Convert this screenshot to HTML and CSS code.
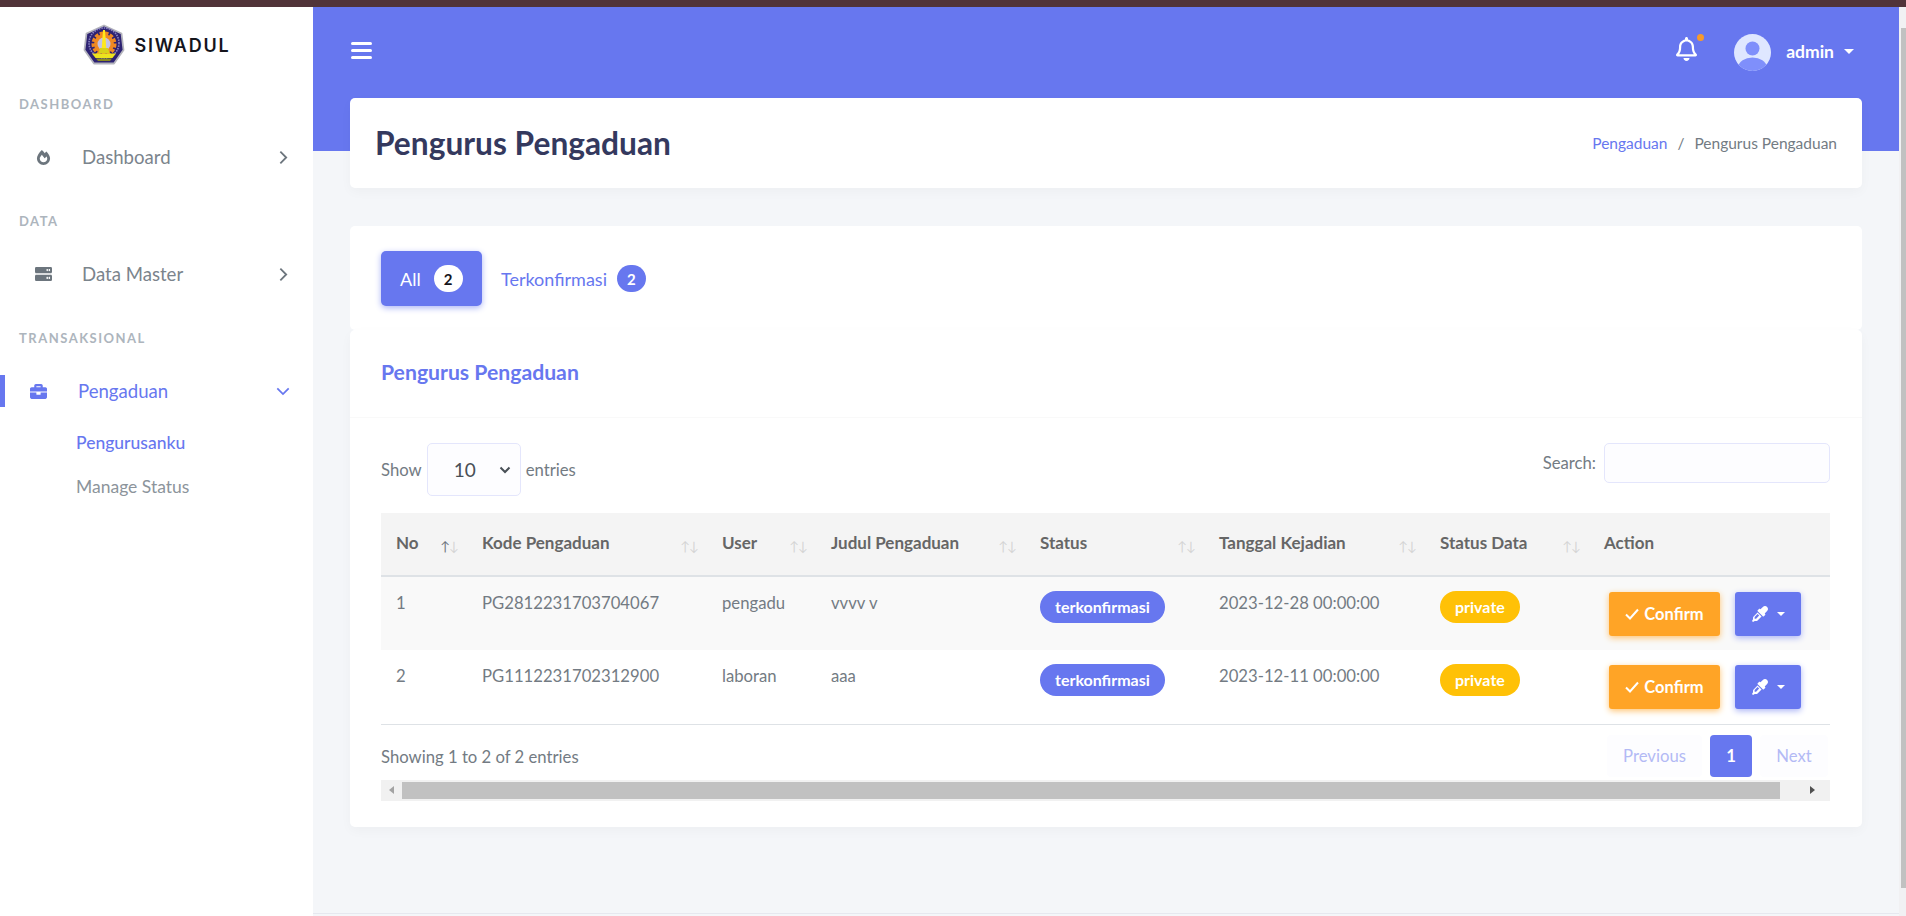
FILE: index.html
```html
<!DOCTYPE html>
<html lang="id">
<head>
<meta charset="utf-8">
<title>Pengurus Pengaduan</title>
<link rel="stylesheet" href="styles.css">
</head>
<body>
<div class="topbar"></div>
<div class="app">
  <aside class="sidebar">
    <div class="brand">
      <svg class="logo" viewBox="0 0 42 42" aria-hidden="true">
        <path d="M21 1.500 38.500 9.500 40.500 26 31 39.500H11L1.500 26 3.500 9.500Z" fill="#2d2272" stroke="#b4b4bc" stroke-width="1.800" stroke-linejoin="round"/>
        <circle cx="21" cy="19" r="15" fill="none" stroke="#8c86c4" stroke-width="1.600" stroke-dasharray="1.500 1"/>
        <circle cx="21" cy="20" r="10.500" fill="none" stroke="#ef8a22" stroke-width="4" stroke-dasharray="3.500 1.500"/>
        <circle cx="21" cy="20" r="10" fill="#ef8a22"/>
        <circle cx="21" cy="20" r="6.500" fill="#c4c3e4"/>
        <path d="M20 6h2l1.300 19h-4.600Z" fill="#ffe91c"/>
        <path d="M17 24h8l1.500 5h-11Z" fill="#d9d21a"/>
        <path d="M9 29.500h24L29.500 34h-17Z" fill="#ece31f"/>
        <path d="M13 34.500h16L27 37H15Z" fill="#8a8a20"/>
      </svg>
      <span class="brand-name">SIWADUL</span>
    </div>
    <div class="menu-head first">DASHBOARD</div>
    <a class="menu-item">
      <svg class="mi-icon" viewBox="0 0 448 512"><path d="M323.56 51.2c-20.8 19.3-39.58 39.59-56.22 59.97C240.08 73.62 206.28 35.53 168 0 69.74 91.17 0 209.96 0 281.6 0 408.85 100.290 512 224 512s224-103.15 224-230.4c0-53.27-51.98-163.14-124.44-230.4zm-19.47 340.65C282.43 407.01 255.72 416 226.86 416 154.71 416 96 368.26 96 290.75c0-38.61 24.31-72.63 72.79-130.75 6.93 7.98 98.83 125.34 98.83 125.34l58.63-66.88c4.14 6.85 7.91 13.55 11.27 19.97 27.35 52.19 15.81 118.97-33.43 153.42z"/></svg>
      <span class="mi-label">Dashboard</span>
      <svg class="mi-chev" viewBox="0 0 10 16"><path d="M1.500 1.500 8 8l-6.500 6.500"/></svg>
    </a>
    <div class="menu-head">DATA</div>
    <a class="menu-item">
      <svg class="mi-icon srv" viewBox="0 32 512 288" preserveAspectRatio="none"><path d="M480 160H32c-17.673 0-32-14.327-32-32V64c0-17.673 14.327-32 32-32h448c17.673 0 32 14.327 32 32v64c0 17.673-14.327 32-32 32zm-48-88c-13.255 0-24 10.745-24 24s10.745 24 24 24 24-10.745 24-24-10.745-24-24-24zm-64 0c-13.255 0-24 10.745-24 24s10.745 24 24 24 24-10.745 24-24-10.745-24-24-24zm112 248H32c-17.673 0-32-14.327-32-32v-64c0-17.673 14.327-32 32-32h448c17.673 0 32 14.327 32 32v64c0 17.673-14.327 32-32 32zm-48-88c-13.255 0-24 10.745-24 24s10.745 24 24 24 24-10.745 24-24-10.745-24-24-24zm-64 0c-13.255 0-24 10.745-24 24s10.745 24 24 24 24-10.745 24-24-10.745-24-24-24z"/></svg>
      <span class="mi-label">Data Master</span>
      <svg class="mi-chev" viewBox="0 0 10 16"><path d="M1.500 1.500 8 8l-6.500 6.500"/></svg>
    </a>
    <div class="menu-head">TRANSAKSIONAL</div>
    <a class="menu-item active">
      <svg class="mi-icon" viewBox="0 32 512 448"><path d="M320 336c0 8.840-7.160 16-16 16h-96c-8.840 0-16-7.160-16-16v-48H0v144c0 25.600 22.400 48 48 48h416c25.600 0 48-22.400 48-48V288H320v48zm144-208h-80V80c0-25.600-22.400-48-48-48H176c-25.600 0-48 22.400-48 48v48H48c-25.600 0-48 22.400-48 48v80h512v-80c0-25.600-22.400-48-48-48zm-144 0H192V96h128v32z"/></svg>
      <span class="mi-label">Pengaduan</span>
      <svg class="mi-chev down" viewBox="0 0 16 10"><path d="M1.500 1.500 8 8l6.500-6.500"/></svg>
    </a>
    <a class="sub-item current">Pengurusanku</a>
    <a class="sub-item">Manage Status</a>
  </aside>

  <main class="main">
    <header class="hero">
      <button class="burger" aria-label="menu"><i></i><i></i><i></i></button>
      <div class="hero-right">
        <span class="bell">
          <svg viewBox="0 0 448 512"><path d="M439.390 362.290c-19.320-20.760-55.470-51.990-55.470-154.290 0-77.700-54.480-139.900-127.940-155.160V32c0-17.670-14.320-32-31.980-32s-31.980 14.330-31.980 32v20.840C118.560 68.100 64.080 130.300 64.080 208c0 102.300-36.150 133.530-55.470 154.290-6 6.450-8.660 14.160-8.610 21.710.11 16.400 12.980 32 32.100 32h383.800c19.120 0 32-15.600 32.100-32 .05-7.550-2.610-15.270-8.610-21.710zM67.530 368c21.220-27.970 44.420-74.330 44.530-159.420 0-.2-.06-.38-.06-.58 0-61.860 50.140-112 112-112s112 50.140 112 112c0 .2-.06.38-.06.58.11 85.100 23.310 131.460 44.530 159.420H67.530zM224 512c35.320 0 63.970-28.650 63.970-64H160.030c0 35.350 28.650 64 63.970 64z"/></svg>
          <b class="dot"></b>
        </span>
        <svg class="avatar" viewBox="0 0 37 37"><defs><clipPath id="av"><circle cx="18.500" cy="18.500" r="18.500"/></clipPath></defs><g clip-path="url(#av)"><rect width="37" height="37" fill="#dfe7ff"/><circle cx="18.500" cy="14.500" r="7" fill="#7f8ffb"/><ellipse cx="18.500" cy="33" rx="14" ry="9.500" fill="#7f8ffb"/></g></svg>
        <span class="user">admin</span>
        <span class="caret light"></span>
      </div>
    </header>

    <div class="content">
      <section class="card page-head">
        <h1>Pengurus Pengaduan</h1>
        <nav class="crumbs"><a>Pengaduan</a><span class="sep">/</span><span>Pengurus Pengaduan</span></nav>
      </section>

      <section class="card tabs">
        <a class="tab on">All <span class="pill white">2</span></a>
        <a class="tab">Terkonfirmasi <span class="pill blue">2</span></a>
      </section>

      <section class="card data">
        <h2 class="data-title">Pengurus Pengaduan</h2>
        <div class="data-body">
          <div class="dt-top">
            <label class="dt-len">Show <span class="fake-select">10<svg viewBox="0 0 12 8"><path d="M1.500 1.500 6 6l4.500-4.500"/></svg></span> entries</label>
            <label class="dt-search">Search: <span class="fake-input"></span></label>
          </div>
          <table class="tbl">
            <colgroup>
              <col class="c1"><col class="c2"><col class="c3"><col class="c4"><col class="c5"><col class="c6"><col class="c7"><col class="c8">
            </colgroup>
            <thead>
              <tr>
                <th><div class="th-in">No<span class="sort"><b class="dark">↑</b>↓</span></div></th>
                <th><div class="th-in">Kode Pengaduan<span class="sort">↑↓</span></div></th>
                <th><div class="th-in">User<span class="sort">↑↓</span></div></th>
                <th><div class="th-in">Judul Pengaduan<span class="sort">↑↓</span></div></th>
                <th><div class="th-in">Status<span class="sort">↑↓</span></div></th>
                <th><div class="th-in">Tanggal Kejadian<span class="sort">↑↓</span></div></th>
                <th><div class="th-in">Status Data<span class="sort">↑↓</span></div></th>
                <th>Action</th>
              </tr>
            </thead>
            <tbody>
              <tr class="odd">
                <td>1</td><td>PG2812231703704067</td><td>pengadu</td><td>vvvv v</td>
                <td><span class="badge b-blue">terkonfirmasi</span></td>
                <td>2023-12-28 00:00:00</td>
                <td><span class="badge b-yellow">private</span></td>
                <td class="acts">
                  <a class="btn b-orange"><svg class="chk" viewBox="0 0 14 12"><path d="M1 6.500 5 10.500 13 1.500"/></svg>Confirm</a>
                  <a class="btn b-indigo"><svg class="drop" viewBox="0 0 512 512"><path d="M50.750 333.250c-12 12-18.750 28.280-18.750 45.260V424L0 480l32 32 56-32h45.490c16.970 0 33.250-6.740 45.250-18.740l126.640-126.620-128-128L50.750 333.250zM483.880 28.120c-37.470-37.500-98.280-37.500-135.750 0l-77.090 77.090-13.100-13.100c-9.440-9.440-24.650-9.310-33.940 0l-40.970 40.970c-9.370 9.370-9.370 24.570 0 33.940l161.940 161.940c9.440 9.440 24.650 9.310 33.940 0L419.880 288c9.370-9.370 9.370-24.570 0-33.940l-13.100-13.100 77.090-77.090c37.510-37.480 37.510-98.260.01-135.750z"/><path class="drop-in" d="M84 348 178 254 230 306 130 410H84Z"/></svg><span class="caret small"></span></a>
                </td>
              </tr>
              <tr>
                <td>2</td><td>PG1112231702312900</td><td>laboran</td><td>aaa</td>
                <td><span class="badge b-blue">terkonfirmasi</span></td>
                <td>2023-12-11 00:00:00</td>
                <td><span class="badge b-yellow">private</span></td>
                <td class="acts">
                  <a class="btn b-orange"><svg class="chk" viewBox="0 0 14 12"><path d="M1 6.500 5 10.500 13 1.500"/></svg>Confirm</a>
                  <a class="btn b-indigo"><svg class="drop" viewBox="0 0 512 512"><path d="M50.750 333.250c-12 12-18.750 28.280-18.750 45.260V424L0 480l32 32 56-32h45.490c16.970 0 33.250-6.740 45.250-18.740l126.640-126.620-128-128L50.750 333.250zM483.880 28.120c-37.470-37.500-98.280-37.500-135.750 0l-77.090 77.090-13.100-13.100c-9.440-9.440-24.650-9.310-33.940 0l-40.970 40.970c-9.370 9.370-9.370 24.570 0 33.940l161.940 161.940c9.440 9.440 24.650 9.310 33.940 0L419.880 288c9.370-9.370 9.370-24.570 0-33.940l-13.100-13.100 77.090-77.090c37.510-37.480 37.510-98.260.01-135.750z"/><path class="drop-in" d="M84 348 178 254 230 306 130 410H84Z"/></svg><span class="caret small"></span></a>
                </td>
              </tr>
            </tbody>
          </table>
          <div class="dt-foot">
            <span class="dt-info">Showing 1 to 2 of 2 entries</span>
            <div class="pager">
              <a class="pg off prev">Previous</a>
              <a class="pg cur">1</a>
              <a class="pg off next">Next</a>
            </div>
          </div>
          <div class="hscroll">
            <span class="arrow left"></span>
            <span class="thumb"></span>
            <span class="arrow right"></span>
          </div>
        </div>
      </section>
    </div>
    <footer class="foot-line"></footer>
  </main>

  <div class="vscroll"><span class="v-thumb"></span></div>
</div>
</body>
</html>
```
FILE: styles.css
```css
* { box-sizing: border-box; }
html, body { height: 100%; }
body {
  margin: 0;
  overflow: hidden;
  background: #f4f6f9;
  color: #737b83;
  font-family: "Lato", "Noto Sans", sans-serif;
  font-size: 16.700px;
}
a { text-decoration: none; }

.topbar { height: 7px; background: #513439; }
.app { display: flex; height: 909px; }

/* sidebar */
.sidebar { width: 313px; flex: none; background: #fff; }
.brand { display: flex; align-items: center; justify-content: center; gap: 10px; height: 61px; padding-top: 15px; }
.logo { width: 42px; height: 42px; flex: none; }
.brand-name { font-family: "Inter", sans-serif; font-weight: 600; font-size: 18px; letter-spacing: 1.800px; color: #15151c; }
.menu-head { height: 16px; margin: 0 0 0 19px; font-size: 13px; line-height: 16px; font-weight: 700; letter-spacing: 1.500px; color: #adb5bd; }
.menu-head.first { margin-top: 28px; }
.menu-item { display: flex; align-items: center; height: 60px; margin: 15px 0 26px; padding: 0 25px 0 36px; color: #7b848c; font-size: 18.600px; }
.mi-icon { width: 15px; height: 15px; fill: #6c757d; flex: none; margin-right: 31px; }
.mi-icon.srv { width: 17px; height: 14px; margin-left: -1px; margin-right: 30px; }
.mi-label { flex: 1; }
.mi-chev { width: 9px; height: 15px; fill: none; stroke: #6c757d; stroke-width: 2; flex: none; }
.menu-item.active { color: #6777ef; box-shadow: inset 5px 0 0 #6777ef; height: 32px; margin: 29px 0 14px; padding-left: 30px; }
.menu-item.active .mi-icon { fill: #6777ef; width: 17px; height: 15px; margin-right: 31px; }
.mi-chev.down { width: 14px; height: 9px; stroke: #6777ef; margin-right: -2px; }
.sub-item { display: block; height: 44px; padding-left: 76px; line-height: 44px; font-size: 17.500px; color: #8c949b; }
.sub-item.current { color: #6777ef; font-weight: 500; }

/* main */
.main { flex: 1; min-width: 0; display: flex; flex-direction: column; }
.hero { height: 144px; flex: none; background: #6777ef; display: flex; justify-content: space-between; padding: 35px 37px 0 38px; }
.burger { width: 21px; height: 17px; padding: 0; border: 0; background: none; display: flex; flex-direction: column; justify-content: space-between; }
.burger i { display: block; height: 3px; border-radius: 2px; background: #fff; }
.hero-right { display: flex; align-items: flex-start; margin-top: -8px; padding-right: 8px; height: 38px; }
.bell { position: relative; display: block; width: 21px; height: 24px; margin: 3px 37px 0 0; }
.bell svg { display: block; width: 21px; height: 24px; fill: #fff; }
.dot { position: absolute; top: -3px; right: -7px; width: 7px; height: 7px; border-radius: 50%; background: #f79a2b; }
.avatar { width: 37px; height: 37px; flex: none; }
.user { margin: 7px 0 0 15px; font-size: 17.500px; font-weight: 700; color: #fff; line-height: 22px; }
.caret { display: inline-block; border-left: 5px solid transparent; border-right: 5px solid transparent; border-top: 5px solid #fff; }
.caret.light { margin: 15px 0 0 10px; }

.content { flex: 1; margin-top: -53px; padding: 0 37px; }
.card { background: #fff; border-radius: 5px; box-shadow: 0 4px 12px rgba(0, 0, 0, .03); }
.page-head { height: 90px; display: flex; align-items: center; justify-content: space-between; padding: 0 25px; margin-bottom: 38px; }
.page-head h1 { margin: 0; font-size: 31.700px; font-weight: 700; color: #34395e; }
.crumbs { display: flex; font-size: 15.500px; }
.crumbs a { color: #6777ef; }
.sep { margin: 0 10px; }

.tabs { height: 104px; display: flex; align-items: flex-start; padding: 25px 31px 0; box-shadow: none; }
.tab { display: flex; align-items: center; height: 55px; padding: 0 19px; color: #6777ef; font-size: 18px; border-radius: 5px; }
.tab.on { width: 101px; background: #6777ef; color: #fff; box-shadow: 0 2px 6px #acb5f6; }
.pill { display: flex; align-items: center; justify-content: center; height: 27px; min-width: 29px; margin-left: 10px; border-radius: 14px; font-size: 15px; font-weight: 700; }
.pill.white { margin-left: 13px; background: #fff; color: #15151c; }
.pill.blue { background: #6777ef; color: #fff; }

.data { height: 497px; }
.data-title { height: 88px; margin: 0; padding: 0 31px; line-height: 84px; font-size: 21.200px; font-weight: 700; color: #6777ef; border-bottom: 1px solid #f9f9f9; }
.data-body { padding: 0 32px 0 31px; }
.dt-top { display: flex; justify-content: space-between; height: 78px; padding-top: 25px; }
.dt-len { display: flex; align-items: center; height: 53px; gap: 4px; }
.fake-select { display: flex; align-items: center; justify-content: space-between; width: 94px; height: 53px; padding: 0 9px 0 26px; margin: 0 1px; background: #fdfdff; border: 1px solid #e4e6fc; border-radius: 5px; font-size: 19px; color: #495057; }
.fake-select svg { width: 12px; height: 8px; fill: none; stroke: #495057; stroke-width: 2; }
.dt-search { display: flex; align-items: center; height: 40px; gap: 8px; }
.fake-input { display: block; width: 226px; height: 40px; background: #fdfdff; border: 1px solid #e4e6fc; border-radius: 5px; }

.tbl { width: 1449px; table-layout: fixed; border-collapse: collapse; margin-top: 17px; }
.c1 { width: 86px; } .c2 { width: 240px; } .c3 { width: 109px; } .c4 { width: 209px; }
.c5 { width: 179px; } .c6 { width: 221px; } .c7 { width: 164px; } .c8 { width: 241px; }
.tbl th { height: 63px; padding: 0 9px 4px 15px; background: #f4f4f4; border-bottom: 2px solid #dee2e6; text-align: left; font-size: 17px; font-weight: 700; color: #666; vertical-align: middle; }
.th-in { display: flex; justify-content: space-between; align-items: center; }
.sort { font-size: 13px; font-weight: 400; color: #d4d4d4; padding-top: 8px; letter-spacing: -1px; }
.sort .dark { font-weight: 400; color: #6c757d; }
.tbl td { height: 74px; padding: 14px 15px 0; vertical-align: top; font-size: 16.700px; line-height: 24px; color: #737b83; }
.tbl tbody tr:last-child td { border-bottom: 1px solid #dee2e6; }
.odd td { background: #f9f9f9; }
.badge { display: inline-block; height: 32px; padding: 0 15px; border-radius: 16px; line-height: 32px; font-size: 16px; font-weight: 700; color: #fff; vertical-align: top; }
.b-blue { background: #6777ef; }
.b-yellow { background: #ffc107; }
.tbl td.acts { padding: 15px 0 0 20px; }
.btn { display: inline-flex; align-items: center; justify-content: center; height: 44px; border-radius: 3px; color: #fff; font-size: 16.500px; font-weight: 700; vertical-align: top; }
.b-orange { width: 111px; margin-right: 11px; background: #ffa426; box-shadow: 0 2px 6px #ffc473; }
.b-indigo { width: 66px; background: #6777ef; box-shadow: 0 2px 6px #acb5f6; }
.chk { width: 14px; height: 12px; margin-right: 5px; fill: none; stroke: #fff; stroke-width: 2; flex: none; }
.drop { width: 16px; height: 16px; fill: #fff; margin-right: 9px; }
.drop-in { fill: #6777ef; }
.caret.small { border-left-width: 4px; border-right-width: 4px; border-top-width: 4px; }

.dt-foot { display: flex; justify-content: space-between; height: 55px; padding-top: 10px; }
.dt-info { padding-top: 12px; }
.pager { display: flex; gap: 8px; padding-right: 2px; }
.pg { display: flex; align-items: center; justify-content: center; height: 42px; border-radius: 4px; }
.pg.off { background: #fdfdff; color: #b3baf5; }
.pg.prev { width: 95px; }
.pg.next { width: 68px; }
.pg.cur { width: 42px; background: #6777ef; color: #fff; font-weight: 700; }

.hscroll { display: flex; align-items: center; height: 21px; width: 1449px; background: #f1f1f1; }
.thumb { display: block; width: 1378px; height: 17px; background: #c1c1c1; }
.arrow { display: block; width: 21px; flex: none; }
.arrow.left::before, .arrow.right::before { content: ""; display: block; width: 0; margin: 0 auto; border-top: 4.500px solid transparent; border-bottom: 4.500px solid transparent; }
.arrow.left::before { border-right: 5px solid #a3a3a3; }
.arrow.right { margin-left: auto; width: 50px; padding-left: 14px; }
.arrow.right::before { border-left: 5px solid #505050; }

.foot-line { height: 3px; flex: none; border-top: 1px solid #e6e8ef; }

.vscroll { width: 7px; flex: none; background: #f1f1f3; padding: 21px 0 0 2px; }
.v-thumb { display: block; height: 860px; background: #c1c1c1; }
```
